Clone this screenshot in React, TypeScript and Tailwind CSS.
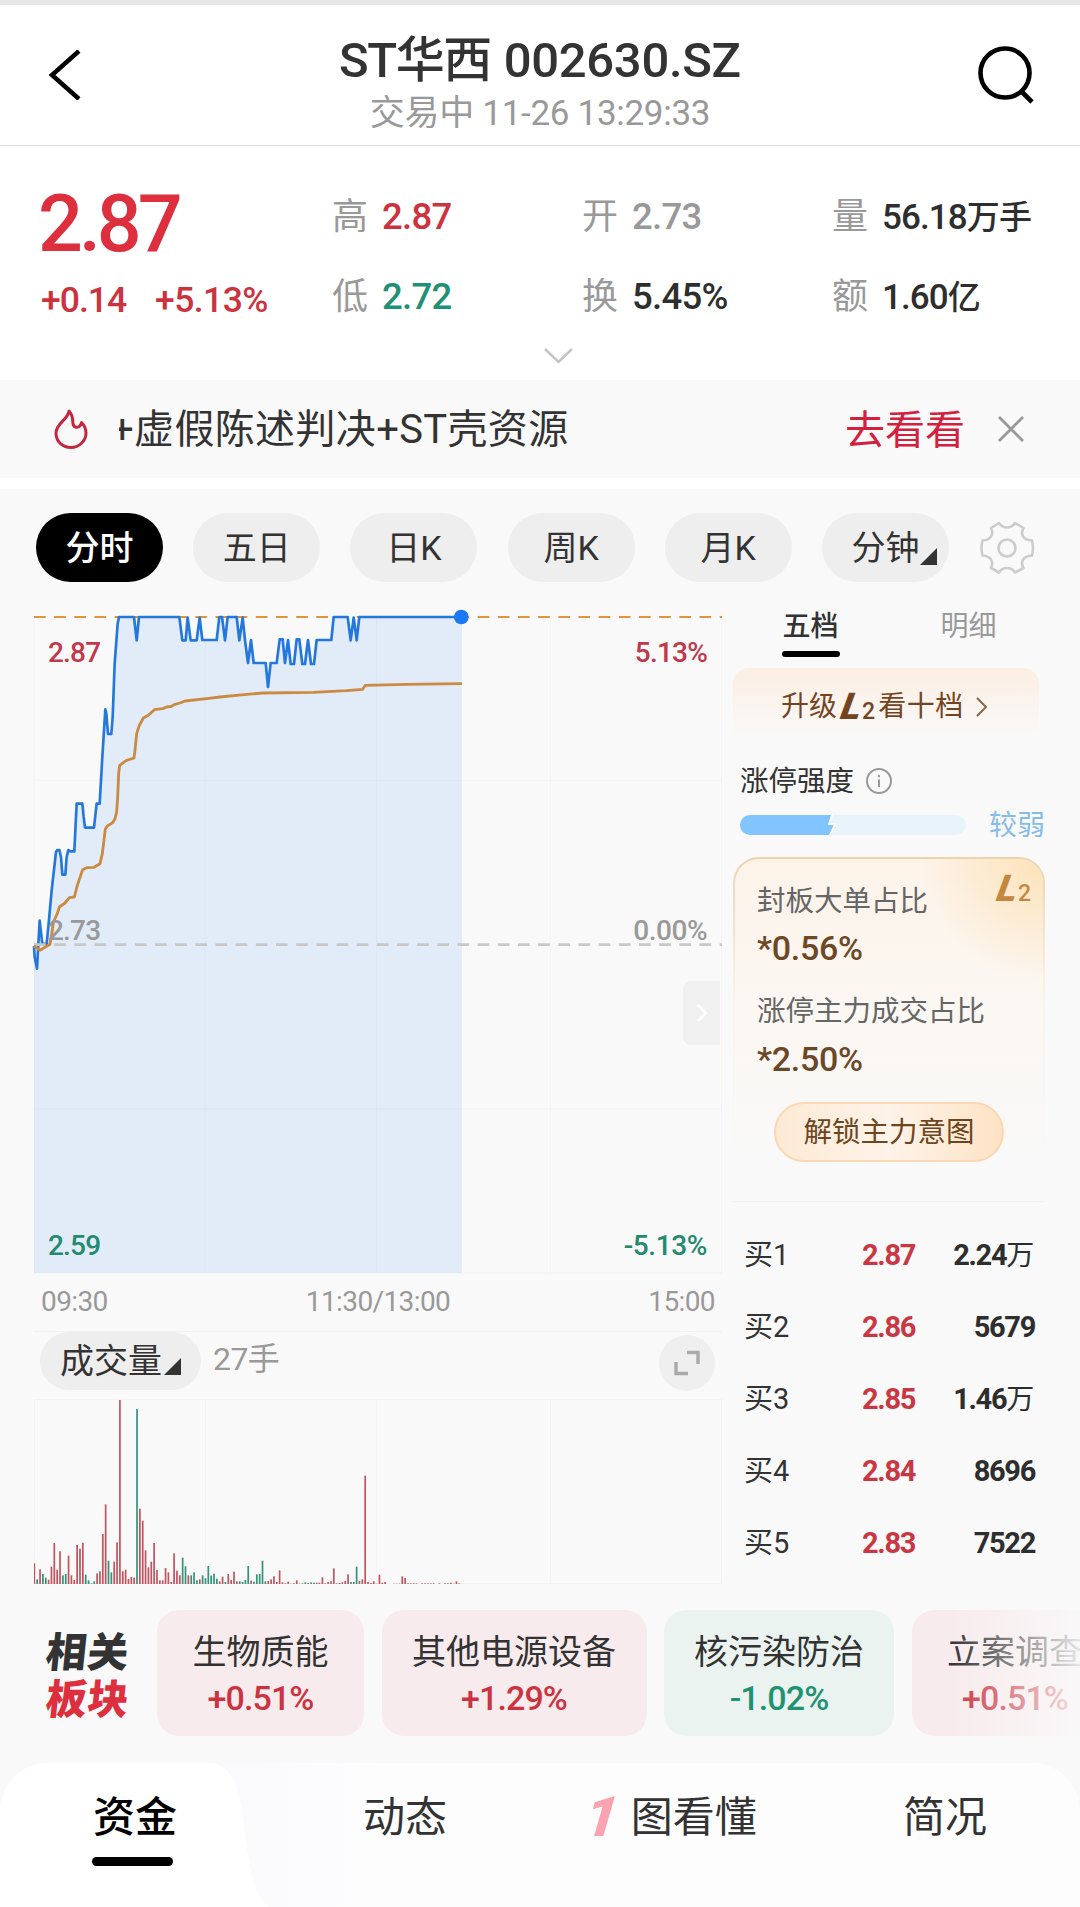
import React, { useState } from 'react';

const PERIODS = ['分时', '五日', '日K', '周K', '月K', '分钟'];

const STATS = [
  [
    { label: '高', value: '2.87', color: 'text-[#cb333f]' },
    { label: '开', value: '2.73', color: 'text-[#999]' },
    { label: '量', value: '56.18', unit: '万手', color: 'text-[#2e2e2e]' },
  ],
  [
    { label: '低', value: '2.72', color: 'text-[#219176]' },
    { label: '换', value: '5.45%', color: 'text-[#2e2e2e]' },
    { label: '额', value: '1.60', unit: '亿', color: 'text-[#2e2e2e]' },
  ],
];

const BIDS = [
  { label: '买1', price: '2.87', amount: '2.24', unit: '万' },
  { label: '买2', price: '2.86', amount: '5679' },
  { label: '买3', price: '2.85', amount: '1.46', unit: '万' },
  { label: '买4', price: '2.84', amount: '8696' },
  { label: '买5', price: '2.83', amount: '7522' },
];

const SECTORS = [
  { name: '生物质能', change: '+0.51%', box: 'w-[207px] bg-[#f8ebed]', text: 'text-[#cb3340]' },
  { name: '其他电源设备', change: '+1.29%', box: 'w-[265px] bg-[#f8ebed]', text: 'text-[#cb3340]' },
  { name: '核污染防治', change: '-1.02%', box: 'w-[230px] bg-[#eaf3f0]', text: 'text-[#1f9272]' },
  { name: '立案调查', change: '+0.51%', box: 'w-[207px] bg-[#f8ebed]', text: 'text-[#cb3340]' },
];

// chart space: three units per pixel, origin at the top left of the plot
const PRICE =
  '42,1067 44,1100 51,1135 54,1080 59,991 67,1062 80,1060 85,1010 95,900 108,785 112,779 118,779 123,800 127,853 136,853 140,800 145,779 150,783 163,783 166,720 170,640 187,640 191,680 195,712 222,712 230,640 239,640 247,500 256,357 259,370 264,431 274,431 278,380 284,220 293,100 297,80 342,80 350,150 357,80 478,80 487,150 497,150 503,82 512,150 530,150 539,82 547,149 590,149 598,80 606,80 615,150 623,80 650,80 658,150 668,82 675,150 684,218 693,149 701,218 737,218 744,290 752,218 770,218 779,147 788,147 795,218 804,149 812,221 822,221 830,147 838,147 847,221 855,221 864,149 873,221 882,221 890,149 934,149 941,80 983,80 992,150 1001,82 1010,150 1018,80 1324,80';

const AVERAGE =
  '42,1067 60,1080 90,1062 97,1020 100,995 112,970 118,950 135,938 148,922 163,920 172,885 188,838 200,832 222,831 240,820 247,790 256,716 262,707 278,697 285,685 290,665 293,620 296,550 299,525 318,511 342,503 345,480 350,430 358,405 370,383 385,375 403,358 428,355 440,350 455,348 465,342 480,338 495,332 560,325 600,320 680,312 730,308 880,306 980,301 1028,297 1036,285 1160,282 1326,280';

// one bar per minute, negative = sell side
const VOLUME = [
  62, -14, 44, -30, -19, 13, 52, 123, 43, 98, -26, -30, 85, 26, 12, 117, 106, 124, -28, -11, -2, -8, 32, 38, 150, 239,
  -70, -35, 67, 125, 552, 38, 43, 15, 21, 19, -525, 226, 190, 101, 50, 67, 123, 42, 11, 11, 48, 35, 6, 92, 40, 26, -79,
  -53, 26, -26, -35, -11, 14, -26, -17, -54, -25, -31, -16, 8, 22, -6, 30, 12, 37, 8, -8, -6, -12, -54, 10, -7, -29,
  -30, -70, -8, 9, 14, 23, 6, 41, 5, 2, 7, 1, 2, 11, 1, -2, -5, 3, -5, -4, 4, 4, 20, 2, 6, 8, 47, 2, 3, 5, 9, 29, -6,
  -6, -52, 9, 14, 325, 6, 3, 8, 1, 28, 4, 6, 0, 0, 1, 1, 1, 23, 18, 2, 2, 2, 2, 0, 2, 2, 2, 2, 2, 0, 2, 0, 2, 2, 4, 1, 8,
  2,
];

const Header = () => (
  <header className="flex h-[146px] items-center justify-between border-t-[5px] border-b border-t-[#e8e8e8] border-b-[#dcdcdc] bg-white pr-[45px] pl-12">
    <button className="w-[55px]">
      <svg width="34" height="50" viewBox="0 0 34 50" fill="none" stroke="#000" strokeWidth="4.5">
        <path d="M31 1 L4 25 L31 49" />
      </svg>
    </button>
    <div className="flex flex-col items-center pt-[24px]">
      <h1 className="flex h-[52px] items-center gap-[13px] text-[49px] leading-none font-medium text-[#333]">
        <span className="tracking-[-1.5px]">ST华西</span>
        <span className="tracking-[-0.3px]">002630.SZ</span>
      </h1>
      <p className="flex h-[54px] items-center text-[35px] leading-none tracking-[-0.3px] text-[#999]">
        交易中 11-26 13:29:33
      </p>
    </div>
    <button>
      <svg width="58" height="58" viewBox="0 0 58 58" fill="none" stroke="#000" strokeWidth="4.600">
        <circle cx="28" cy="27" r="24.5" />
        <path d="M44 45 L55 56" />
      </svg>
    </button>
  </header>
);

const Quote = () => (
  <section className="flex h-[234px] flex-col bg-white pt-px">
    <div className="flex h-[190px] pl-[38px]">
      <div className="flex w-[294px] shrink-0 flex-col pt-[36px] text-[#dd2f3d]">
        <div className="flex h-[82px] items-center text-[79px] leading-none font-medium tracking-[-4px]">2.87</div>
        <div className="flex h-[70px] items-center gap-[29px] pl-[3px] pt-px text-[35.5px] leading-none font-medium tracking-[-1px] text-[#cb333f]">
          <span>+0.14</span>
          <span className="tracking-[-0.6px]">+5.13%</span>
        </div>
      </div>
      <div className="flex shrink-0 flex-col pt-[30px]">
        {STATS.map((row, i) => (
          <div key={i} className="flex h-20 items-center">
            {row.map((s) => (
              <div key={s.label} className="flex w-[250px] shrink-0 items-center gap-3.5 leading-none whitespace-nowrap">
                <span className="text-[36px] text-[#999]">{s.label}</span>
                <span
                  className={`font-medium ${s.unit ? 'text-[35px] tracking-[-0.9px]' : 'text-[36.500px] tracking-[-0.7px]'} ${s.color}`}
                >
                  {s.value}
                  {s.unit && <span className="text-[33px]">{s.unit}</span>}
                </span>
              </div>
            ))}
          </div>
        ))}
      </div>
    </div>
    <svg className="ml-[543px]" width="31" height="38" viewBox="0 0 31 38" fill="none" stroke="#c4c4c4" strokeWidth="2.5">
      <path d="M2 12 L15.500 25 L29 12" />
    </svg>
  </section>
);

const Notice = () => (
  <section className="flex h-[98px] items-center bg-[#f9f9f9] pl-[54px] text-[40px] leading-none">
    <svg width="34" height="40" viewBox="0 0 34 40" fill="none" stroke="#c42640" strokeWidth="3" strokeLinejoin="round">
      <path d="M15 2 C14 11 2 14 2 24 C2 33 9 38.500 17 38.500 C25 38.500 32 32 32 24 C32 20 30.500 16.500 27.500 13.500 C27 17 24 19 21 18 C16.500 16 21.500 8.500 15 2 Z" />
    </svg>
    <div className="ml-[31px] w-[726px] overflow-hidden whitespace-nowrap text-[#333]">
      <span className="-ml-[8px] inline-block pt-1.5 pb-1 tracking-[0.35px]">+虚假陈述判决+ST壳资源</span>
    </div>
    <span className="pt-[3px] text-[#d2213f]">去看看</span>
    <svg className="ml-[32px]" width="28" height="28" viewBox="0 0 28 28" fill="none" stroke="#999" strokeWidth="2.8">
      <path d="M2 2 L26 26 M26 2 L2 26" />
    </svg>
  </section>
);

const Corner = () => (
  <svg className="shrink-0" width="17" height="17" viewBox="0 0 17 17">
    <path d="M17 0 V17 H0 Z" fill="#333" />
  </svg>
);

const Gear = () => (
  <svg width="56" height="54" viewBox="0 0 56 54" fill="none" stroke="#ccc" strokeWidth="2.6" strokeLinejoin="round">
    <path d="M20 2 L12 7 C15 13 12 19 3.500 19.500 Q1.500 27 3.500 34.500 C12 35 15 41 12 47 L20 51.500 C24 45.500 32 45.500 36 51.500 L44.500 47 C41 41 44 35 53 34.500 Q55 27 53 19.500 C44 19 41 13 44.500 7 L36 2 C32 8 24 8 20 2 Z" />
    <circle cx="28" cy="27" r="8.500" />
  </svg>
);

const PeriodTabs = () => {
  const [active, setActive] = useState('分时');

  return (
    <nav className="flex h-[117px] items-center gap-[30.200px] pl-9">
      {PERIODS.map((p) => (
        <button
          key={p}
          onClick={() => setActive(p)}
          className={`flex h-[69px] w-[127px] items-center justify-center rounded-full text-[34px] leading-none ${
            active === p ? 'bg-black font-medium text-white' : 'bg-[#eee] text-[#333]'
          }`}
        >
          {p}
          {p === '分钟' && (
            <span className="mt-[17px] -mr-[18px] ml-px">
              <Corner />
            </span>
          )}
        </button>
      ))}
      <Gear />
    </nav>
  );
};

const PriceChart = () => (
  <div className="relative h-[656px] w-[688px]">
    <svg className="block overflow-visible" width="688" height="656" viewBox="42 80 2064 1968" fill="none">
      <polygon points={`${PRICE} 1326,80 1326,2048 42,2048`} fill="#e2ecf8" />
      <path
        d="M42 80 V2048 M556 80 V2048 M1070 80 V2048 M1592 80 V2048 M2105 80 V2048 M42 570 H2106 M42 1556 H2106 M42 2048 H2106"
        stroke="#000"
        strokeOpacity="0.025"
        strokeWidth="3"
      />
      <path d="M42 80 H2106" stroke="#e0953c" strokeWidth="6" strokeDasharray="35 25.500" />
      <polyline points={PRICE} stroke="#2477dc" strokeWidth="8" strokeLinejoin="round" />
      <path d="M42 1063 H2106" stroke="#c8c8c8" strokeWidth="8" strokeDasharray="35 25.500" />
      <polyline points={AVERAGE} stroke="#cb8a42" strokeWidth="8.5" strokeLinejoin="round" />
      <circle cx="1324" cy="80" r="22" fill="#1b78f5" />
    </svg>
    <div className="absolute inset-0 text-[28px] leading-none font-medium tracking-[-0.8px]">
      <span className="absolute top-[22px] left-[14px] text-[#c0394a]">2.87</span>
      <span className="absolute top-[22px] right-[15px] text-[#c0394a]">5.13%</span>
      <span className="absolute top-[300px] left-[14px] text-[#999]">2.73</span>
      <span className="absolute top-[300px] right-[15px] tracking-[-0.5px] text-[#999]">0.00%</span>
      <span className="absolute bottom-[13px] left-[14px] text-[#238a70]">2.59</span>
      <span className="absolute right-[15px] bottom-[13px] tracking-[-0.4px] text-[#238a70]">-5.13%</span>
    </div>
    <div className="absolute top-[364px] right-[2px] flex h-16 w-[37px] items-center justify-center rounded-l-lg bg-[#f0f0f0]">
      <svg width="12" height="18" viewBox="0 0 12 18" fill="none" stroke="#fff" strokeWidth="2.5">
        <path d="M2 1 L10 9 L2 17" />
      </svg>
    </div>
  </div>
);

const VolumeChart = () => (
  <svg className="mt-[10px] block" width="688" height="185" viewBox="0 0 688 185" fill="none">
    <path
      d="M0.500 0 V185 M171.500 0 V185 M342.500 0 V185 M516.500 0 V185 M687.500 0 V185 M0 0.500 H688 M0 184.500 H688"
      stroke="#f3f3f3"
    />
    {VOLUME.map((v, i) => (
      <rect
        key={i}
        x={i * 2.852 - 0.5}
        y={185 - Math.abs(v) / 3}
        width="1.7"
        height={Math.abs(v) / 3}
        fill={v < 0 ? '#35917a' : '#c0545f'}
      />
    ))}
  </svg>
);

const LevelTwo = ({ className }: { className: string }) => (
  <span className={`inline-flex items-baseline leading-none ${className}`}>
    <b className="-skew-x-[20deg] text-[37px] font-black">L</b>
    <b className="text-[23px] font-medium">2</b>
  </span>
);

const OrderBook = () => (
  <aside className="ml-[11px] flex w-[312px] flex-col text-[28px] leading-none">
    <div className="-mt-[6px] flex h-[57px] text-[#333]">
      <div className="flex w-[155px] flex-col items-center pt-0.5">
        <span className="font-medium">五档</span>
        <span className="mt-[10px] h-1.5 w-[58px] rounded-full bg-black" />
      </div>
      <div className="flex flex-1 flex-col items-center pt-0.5 pl-1 text-[#999]">明细</div>
    </div>

    <div className="flex h-[69px] w-[306px] items-center rounded-t-[16px] bg-linear-to-b from-[#fceee2] to-[#f9f9f9] pt-2 pl-[48px] text-[#744422]">
      升级
      <LevelTwo className="mr-[3px] ml-[5px]" />
      <span className="tracking-[0.5px]">看十档</span>
      <svg className="ml-[11px]" width="13" height="20" viewBox="0 0 13 20" fill="none" stroke="#8a6548" strokeWidth="2">
        <path d="M2 1 L11 10 L2 19" />
      </svg>
    </div>

    <div className="mt-[31px] flex items-center gap-3 pl-[7px] text-[28.5px] text-[#333]">
      涨停强度
      <svg className="-mt-0.5" width="26" height="26" viewBox="0 0 26 26" fill="none" stroke="#999" strokeWidth="2">
        <circle cx="13" cy="13" r="12" />
        <path d="M13 11.500 V19 M13 7 V9.300" />
      </svg>
    </div>

    <div className="mt-[14px] flex h-7 items-center justify-between pl-[7px]">
      <svg width="226" height="20" viewBox="0 0 226 20">
        <rect width="226" height="20" rx="10" fill="#e9f3fc" />
        <path d="M10 0 H91 L88 10 H94 L89 20 H10 A10 10 0 0 1 10 0 Z" fill="#82c4fe" />
        <path d="M92.500 0 L89 9 H95 L90 20" fill="none" stroke="#fff" strokeWidth="1.5" />
      </svg>
      <span className="pt-[3px] text-[#88bce8]">较弱</span>
    </div>

    <div className="mt-[18px] h-[306px] rounded-t-[26px] bg-linear-to-b from-[#ecd3ae] via-[#faf3ea] via-45% to-[#f9f9f9] p-0.5">
      <div className="relative flex h-full flex-col rounded-t-[24px] bg-linear-to-b from-[#fdf3e9] via-[#fbf7f2] to-[#f9f9f9] pt-[29px] pl-[22px]">
        <div className="absolute inset-0 rounded-t-[24px] bg-radial-[circle_at_100%_0%] from-[#fce2b8] to-transparent to-28%" />
        <LevelTwo className="absolute top-[11px] right-3 text-[#c4873f]" />
        <span className="relative text-[28.5px] text-[#666]">封板大单占比</span>
        <span className="relative mt-[15px] text-[34px] font-medium tracking-[-0.3px] text-[#6d4827]">*0.56%</span>
        <span className="relative mt-[33px] text-[28.5px] text-[#666]">涨停主力成交占比</span>
        <span className="relative mt-[15px] text-[34px] font-medium tracking-[-0.3px] text-[#6d4827]">*2.50%</span>
        <button className="relative mt-[26px] ml-[17px] flex h-[60px] w-[230px] shrink-0 items-center justify-center rounded-full border-2 border-[#fbd8b4] bg-linear-to-r from-[#fdead5] via-[#fef3e9] to-[#fee3c5] pt-1 text-[28.5px] text-[#6d4520]">
          解锁主力意图
        </button>
      </div>
    </div>

    <div className="mt-[38px] border-t border-[#f1f1f1] pt-[18px]">
      {BIDS.map((b) => (
        <div key={b.label} className="flex h-[71.900px] items-center pl-[11px]">
          <span className="w-[118px] text-[29px] text-[#333]">{b.label}</span>
          <span className="text-[29px] font-bold tracking-[-1.3px] text-[#c83844]">{b.price}</span>
          <span
            className={`ml-auto text-[29px] font-bold tracking-[-1.3px] text-[#2e2e2e] ${b.unit ? 'pr-[12px]' : 'pr-[10px]'}`}
          >
            {b.amount}
            {b.unit && <span className="text-[28px] font-normal">{b.unit}</span>}
          </span>
        </div>
      ))}
    </div>
  </aside>
);

const Sectors = () => (
  <section className="relative flex h-[126px] items-center overflow-hidden pl-[46px]">
    <div className="flex w-[111px] shrink-0 flex-col pt-[7px] text-[41px] leading-[47px] font-black tracking-[0.5px]">
      <span className="w-fit -skew-x-6 text-[#333]">相关</span>
      <span className="w-fit -skew-x-6 text-[#dd2f3d]">板块</span>
    </div>
    <div className="flex gap-[17.500px]">
      {SECTORS.map((s) => (
        <div
          key={s.name}
          className={`flex h-[126px] shrink-0 flex-col items-center gap-[12px] rounded-[22px] pt-[25px] leading-none ${s.box}`}
        >
          <span className="text-[34px] text-[#333]">{s.name}</span>
          <span className={`text-[34px] font-medium tracking-[-0.9px] ${s.text}`}>{s.change}</span>
        </div>
      ))}
    </div>
    <div className="absolute inset-y-0 right-0 w-[130px] bg-linear-to-r from-transparent to-[#f9f9f9]/90" />
  </section>
);

const BottomTabs = () => (
  <nav className="relative mt-[27px] flex h-[144px] overflow-hidden rounded-t-[48px] bg-[#fdfdfe] text-[42px] leading-none text-[#333]">
    <svg className="absolute inset-0" width="380" height="144" viewBox="0 0 380 144">
      <defs>
        <linearGradient id="fold" x1="0" x2="1">
          <stop offset="0.6" stopColor="#fafafd" />
          <stop offset="1" stopColor="#fdfdfe" />
        </linearGradient>
      </defs>
      <rect width="380" height="144" fill="url(#fold)" />
      <path d="M0 0 H212 C245 4 240 60 252 112 Q256 134 268 144 H0 Z" fill="#fff" />
    </svg>
    <div className="relative flex w-[270px] flex-col items-center pt-[34px] text-black">
      <span className="font-medium">资金</span>
      <span className="mt-[18px] mr-[5px] h-[9px] w-[81px] rounded-full bg-black" />
    </div>
    <div className="relative flex w-[270px] justify-center pt-[34px]">动态</div>
    <div className="relative flex w-[270px] justify-center pt-[34px] pr-[6px]">
      <b className="-mt-1 mr-[11px] h-[41px] -skew-x-[16deg] text-[56px] leading-[48px] font-black text-[#fba3b1]">1</b>
      图看懂
    </div>
    <div className="relative flex w-[270px] justify-center pt-[34px]">简况</div>
  </nav>
);

export default function App() {
  return (
    <div className="h-[1907px] w-[1080px] overflow-hidden bg-white font-['Roboto','Noto_Sans_CJK_SC',sans-serif]">
      <Header />
      <Quote />
      <Notice />
      <main className="mt-[11px] bg-[#f9f9f9]">
        <PeriodTabs />
        <div className="flex h-[1004px] pt-[11px] pl-[34px]">
          <div className="w-[688px]">
            <PriceChart />
            <div className="flex h-[58px] items-center justify-between px-[7px] text-[28px] leading-none tracking-[-0.6px] text-[#999]">
              <span>09:30</span>
              <span>11:30/13:00</span>
              <span>15:00</span>
            </div>
            <div className="flex h-[58px] items-center border-t border-[#f2f2f2] pl-1.5">
              <button className="flex h-[58px] w-[161px] items-center justify-center gap-0.5 rounded-full bg-[#eee] text-[34px] leading-none text-[#333]">
                成交量
                <span className="mt-3">
                  <Corner />
                </span>
              </button>
              <span className="ml-3 pb-1 text-[32px] leading-none tracking-[-0.6px] text-[#999]">27手</span>
              <span className="mt-1 mr-[7px] ml-auto flex size-[56px] items-center justify-center rounded-full bg-[#efefef]">
                <svg width="26" height="26" viewBox="0 0 26 26" fill="none" stroke="#aaa" strokeWidth="3.4">
                  <path d="M13 2.500 H24 V14 M2 12 V23.500 H14" />
                </svg>
              </span>
            </div>
            <VolumeChart />
          </div>
          <OrderBook />
        </div>
        <Sectors />
        <BottomTabs />
      </main>
    </div>
  );
}
